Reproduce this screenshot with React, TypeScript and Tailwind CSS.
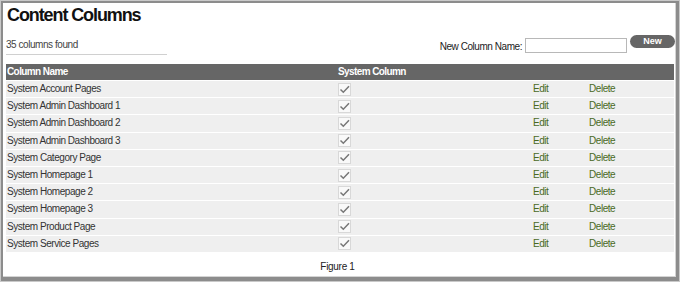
const rows = [
  'System Account Pages',
  'System Admin Dashboard 1',
  'System Admin Dashboard 2',
  'System Admin Dashboard 3',
  'System Category Page',
  'System Homepage 1',
  'System Homepage 2',
  'System Homepage 3',
  'System Product Page',
  'System Service Pages',
];

function Check() {
  return (
    <svg width="13" height="13" viewBox="0 0 13 13" className="block">
      <rect x="0.5" y="0.5" width="12" height="12" fill="#f9f9f9" stroke="#d8d8d8" />
      <path d="M2.5 6.5 L5.3 9.2 L11 3.2" fill="none" stroke="#777" strokeWidth="1.5" />
    </svg>
  );
}

export default function App() {
  return (
    <div className="w-[680px] h-[282px] bg-[#c9c9c9] p-px font-['Liberation_Sans',Arial,sans-serif]">
      <div className="h-full border-[#8c8c8c] border-l-[2px] border-t-[2px] border-r-[3px] border-b-[4px] bg-[#d4d4d4] pr-px pb-px">
        <div className="h-full bg-white px-[3px] relative">
          <h1 className="text-[18px] leading-[20px] font-bold text-[#111] pl-[1px] pt-[2px] tracking-[-1.1px]">
            Content Columns
          </h1>

          <div className="flex items-start justify-between mt-[13px] tracking-[-0.45px]">
            <div className="w-[161px] border-b border-[#d0d0d0] pb-[3px] text-[10px] leading-[13px] text-[#444]">
              35 columns found
            </div>
            <div className="flex items-start -mt-[3px] -mr-[3px]">
              <span className="text-[10px] leading-[13px] text-[#222] mr-[3px] mt-[5px]">New Column Name:</span>
              <div className="w-[102px] h-[15px] border border-[#b8b8b8] mt-[3px]" />
              <button className="ml-[3px] w-[45px] h-[13px] rounded-full bg-[#666] text-white text-[9px] leading-[13px] font-bold tracking-normal">
                New
              </button>
            </div>
          </div>

          <div className="w-[668px] mt-[9px] text-[10px] leading-[16px] tracking-[-0.45px]">
            <div className="flex h-[16px] bg-[#666] text-white font-bold tracking-[-0.6px]">
              <div className="w-[332px] pl-[1px]">Column Name</div>
              <div>System Column</div>
            </div>
            {rows.map((name) => (
              <div key={name} className="flex items-center h-[16.2px] mt-px bg-[#efefef] text-[#333]">
                <div className="w-[332px] pl-[1px]">{name}</div>
                <div className="w-[195px]">
                  <Check />
                </div>
                <div className="w-[56px] text-[#4a6a1e]">Edit</div>
                <div className="text-[#4a6a1e]">Delete</div>
              </div>
            ))}
          </div>

          <div className="text-center text-[10px] leading-[13px] text-[#222] mt-[8px] pr-[3px] tracking-[-0.3px]">Figure 1</div>
        </div>
      </div>
    </div>
  );
}
